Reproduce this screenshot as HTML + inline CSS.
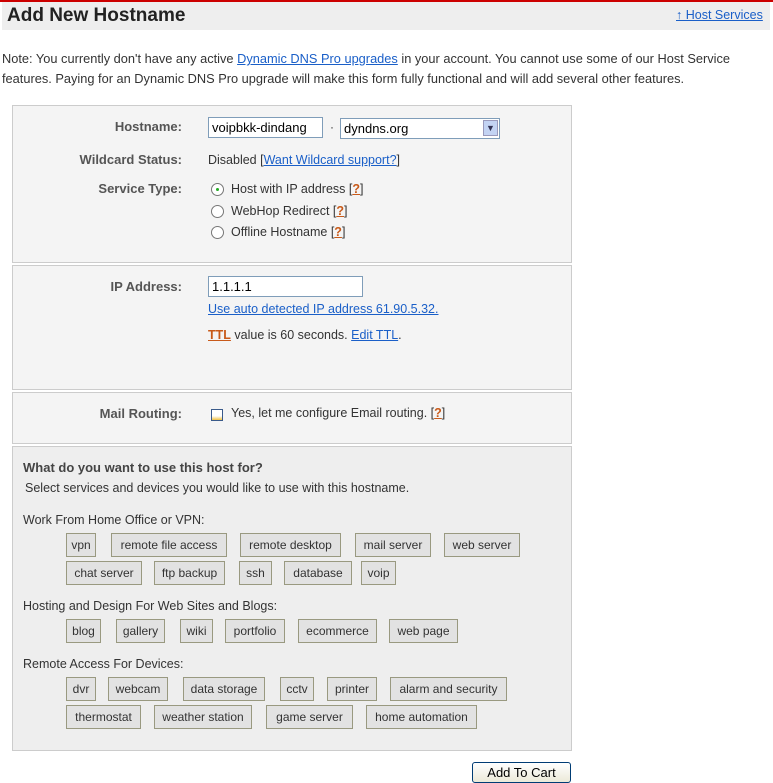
<!DOCTYPE html>
<html><head><meta charset="utf-8"><style>
*{margin:0;padding:0;box-sizing:border-box}
body{width:773px;height:783px;background:#fff;font-family:"Liberation Sans",sans-serif;font-size:12px;color:#333;position:relative;overflow:hidden}
.a{position:absolute;white-space:nowrap}
a{color:#1a5fc8;text-decoration:underline}
.lbl{font-weight:bold;color:#555;text-align:right;width:170px;left:12px}
.p{position:absolute;left:12px;width:560px;border:1px solid #ccc;background:#f4f4f4}
.t{position:absolute;height:24px;border:1px solid #999980;background:#e2e2e2;line-height:22px;text-align:center;font-size:12px;color:#333}
.q{color:#c85a1a;font-weight:bold;text-decoration:underline}
.r{position:absolute;width:13px;height:13px;border:1px solid #777;border-radius:50%;background:#fff}
.in{position:absolute;height:21px;border:1px solid #7f9db9;background:#fff;padding:2px 3px;font-size:13px;color:#000}
</style></head><body>
<div class="a" style="left:0;top:0;width:773px;height:2px;background:#c00"></div>
<div class="a" style="left:2px;top:2px;width:768px;height:28px;background:#eee"></div>
<div class="a" style="left:7px;top:5px;font-size:19px;font-weight:bold;color:#222">Add New Hostname</div>
<div class="a" style="left:676px;top:8px;font-size:12.5px"><a>↑ Host Services</a></div>
<div class="a" style="left:2px;top:49px;line-height:20px;font-size:12.8px">Note: You currently don't have any active <a>Dynamic DNS Pro upgrades</a> in your account. You cannot use some of our Host Service<br>features. Paying for an Dynamic DNS Pro upgrade will make this form fully functional and will add several other features.</div>

<div class="p" style="top:105px;height:158px"></div>
<div class="p" style="top:265px;height:125px"></div>
<div class="p" style="top:392px;height:52px"></div>
<div class="p" style="top:446px;height:305px;background:#eee"></div>

<div class="a lbl" style="top:119px;font-size:13px">Hostname:</div>
<div class="in" style="left:208px;top:117px;width:115px">voipbkk-dindang</div>
<div class="a" style="left:330px;top:120px">·</div>
<div class="in" style="left:340px;top:118px;width:160px">dyndns.org</div>
<div class="a" style="left:483px;top:120px;width:15px;height:16px;background:#c3d3f3;border:1px solid #99b;color:#335;font-size:9px;text-align:center;line-height:14px">▼</div>
<div class="a lbl" style="top:152px;font-size:13px">Wildcard Status:</div>
<div class="a" style="left:208px;top:153px;font-size:12.5px">Disabled [<a>Want Wildcard support?</a>]</div>
<div class="a lbl" style="top:181px;font-size:13px">Service Type:</div>
<div class="r" style="left:211px;top:183px"><div style="position:absolute;left:4px;top:4px;width:3px;height:3px;background:#2a2;border-radius:50%"></div></div>
<div class="a" style="left:231px;top:182px;font-size:12.5px">Host with IP address [<span class="q">?</span>]</div>
<div class="r" style="left:211px;top:205px"></div>
<div class="a" style="left:231px;top:204px;font-size:12.5px">WebHop Redirect [<span class="q">?</span>]</div>
<div class="r" style="left:211px;top:226px"></div>
<div class="a" style="left:231px;top:225px;font-size:12.5px">Offline Hostname [<span class="q">?</span>]</div>

<div class="a lbl" style="top:279px;font-size:13px">IP Address:</div>
<div class="in" style="left:208px;top:276px;width:155px">1.1.1.1</div>
<div class="a" style="left:208px;top:302px;font-size:12.5px"><a>Use auto detected IP address 61.90.5.32.</a></div>
<div class="a" style="left:208px;top:328px;font-size:12.5px"><span class="q">TTL</span> value is 60 seconds. <a>Edit TTL</a>.</div>

<div class="a lbl" style="top:406px;font-size:13px">Mail Routing:</div>
<div class="a" style="left:211px;top:409px;width:12px;height:12px;border:1px solid #3a5a8a;background:linear-gradient(#fff 60%,#f0c040)"></div>
<div class="a" style="left:231px;top:406px;font-size:12.5px">Yes, let me configure Email routing. [<span class="q">?</span>]</div>

<div class="a" style="left:23px;top:460px;font-weight:bold;font-size:13px;color:#444">What do you want to use this host for?</div>
<div class="a" style="left:25px;top:481px;font-size:12.5px">Select services and devices you would like to use with this hostname.</div>
<div class="a" style="left:23px;top:513px;font-size:12.5px">Work From Home Office or VPN:</div>
<div class="t" style="left:66px;top:533px;width:30px">vpn</div>
<div class="t" style="left:111px;top:533px;width:116px">remote file access</div>
<div class="t" style="left:240px;top:533px;width:101px">remote desktop</div>
<div class="t" style="left:355px;top:533px;width:76px">mail server</div>
<div class="t" style="left:444px;top:533px;width:76px">web server</div>
<div class="t" style="left:66px;top:561px;width:76px">chat server</div>
<div class="t" style="left:154px;top:561px;width:71px">ftp backup</div>
<div class="t" style="left:239px;top:561px;width:33px">ssh</div>
<div class="t" style="left:284px;top:561px;width:68px">database</div>
<div class="t" style="left:361px;top:561px;width:35px">voip</div>
<div class="a" style="left:23px;top:599px;font-size:12.5px">Hosting and Design For Web Sites and Blogs:</div>
<div class="t" style="left:66px;top:619px;width:35px">blog</div>
<div class="t" style="left:116px;top:619px;width:49px">gallery</div>
<div class="t" style="left:180px;top:619px;width:33px">wiki</div>
<div class="t" style="left:225px;top:619px;width:60px">portfolio</div>
<div class="t" style="left:298px;top:619px;width:79px">ecommerce</div>
<div class="t" style="left:389px;top:619px;width:69px">web page</div>
<div class="a" style="left:23px;top:657px;font-size:12.5px">Remote Access For Devices:</div>
<div class="t" style="left:66px;top:677px;width:30px">dvr</div>
<div class="t" style="left:108px;top:677px;width:60px">webcam</div>
<div class="t" style="left:183px;top:677px;width:82px">data storage</div>
<div class="t" style="left:280px;top:677px;width:34px">cctv</div>
<div class="t" style="left:327px;top:677px;width:50px">printer</div>
<div class="t" style="left:390px;top:677px;width:117px">alarm and security</div>
<div class="t" style="left:66px;top:705px;width:75px">thermostat</div>
<div class="t" style="left:154px;top:705px;width:98px">weather station</div>
<div class="t" style="left:266px;top:705px;width:87px">game server</div>
<div class="t" style="left:366px;top:705px;width:111px">home automation</div>

<div class="a" style="left:472px;top:762px;width:99px;height:21px;border:1px solid #003c74;border-radius:3px;background:linear-gradient(#fff,#ece9d8);text-align:center;line-height:19px;font-size:13px;color:#000">Add To Cart</div>
</body></html>
